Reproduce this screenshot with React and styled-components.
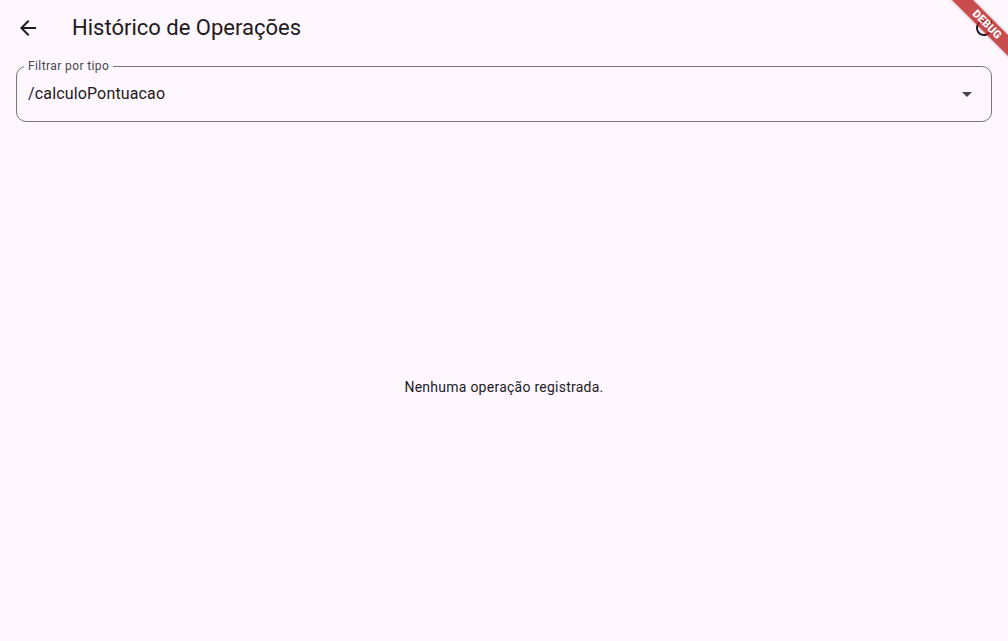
import React from "react"
import styled, { createGlobalStyle } from "styled-components"

const GlobalStyle = createGlobalStyle`
  html, body {
    margin: 0;
    padding: 0;
    background: #fef7ff;
    font-family: Roboto, "Liberation Sans", sans-serif;
    color: #1d1b20;
  }
  * { box-sizing: border-box; }
`

const BackIcon = () => (
  <svg width="24" height="24" viewBox="0 0 24 24" fill="#1d1b20">
    <path d="M20 11H7.83l5.59-5.59L12 4l-8 8 8 8 1.41-1.41L7.83 13H20v-2z" />
  </svg>
)

const RefreshIcon = () => (
  <svg width="24" height="24" viewBox="0 0 24 24" fill="#1d1b20">
    <path d="M17.65 6.35A7.958 7.958 0 0 0 12 4c-4.42 0-7.99 3.58-7.99 8s3.57 8 7.99 8c3.73 0 6.84-2.55 7.73-6h-2.08A5.99 5.99 0 0 1 12 18c-3.31 0-6-2.69-6-6s2.69-6 6-6c1.66 0 3.14.69 4.22 1.78L13 11h7V4l-2.350 2.35z" />
  </svg>
)

const ArrowDropDown = () => (
  <svg width="24" height="24" viewBox="0 0 24 24" fill="#49454f">
    <path d="M7 10l5 5 5-5z" />
  </svg>
)

const App = () => {
  return (
    <>
      <GlobalStyle />
      <Page>
        <AppBar>
          <IconButton aria-label="Voltar">
            <BackIcon />
          </IconButton>
          <Title>Histórico de Operações</Title>
          <IconButton aria-label="Atualizar">
            <RefreshIcon />
          </IconButton>
        </AppBar>
        <FilterArea>
          <Field>
            <FieldLabel>Filtrar por tipo</FieldLabel>
            <FieldValue>/calculoPontuacao</FieldValue>
            <ArrowDropDown />
          </Field>
        </FilterArea>
        <Empty>
          <EmptyText>Nenhuma operação registrada.</EmptyText>
        </Empty>
        <DebugBanner>DEBUG</DebugBanner>
      </Page>
    </>
  )
}

export default App

const Page = styled.div`
  position: relative;
  height: 641px;
  overflow: hidden;
  display: flex;
  flex-direction: column;
  background: #fef7ff;
`

const AppBar = styled.header`
  height: 56px;
  display: flex;
  align-items: center;
  padding: 0 0 0 4px;
  flex-shrink: 0;
`

const IconButton = styled.button`
  width: 48px;
  height: 48px;
  border: none;
  background: transparent;
  padding: 0;
  display: flex;
  align-items: center;
  justify-content: center;
  cursor: pointer;
`

const Title = styled.h1`
  flex: 1;
  margin: 0 0 0 20px;
  font-size: 22px;
  font-weight: 400;
  line-height: 28px;
  color: #1d1b20;
`

const FilterArea = styled.div`
  padding: 10px 16px 11px;
  flex-shrink: 0;
`

const Field = styled.div`
  position: relative;
  height: 56px;
  border: 1px solid #79747e;
  border-radius: 10px;
  display: flex;
  align-items: center;
  padding: 0 12px 0 11px;
`

const FieldLabel = styled.span`
  position: absolute;
  left: 7px;
  top: -8px;
  padding: 0 4px;
  background: #fef7ff;
  font-size: 12px;
  line-height: 14px;
  color: #49454f;
  letter-spacing: 0.4px;
`

const FieldValue = styled.span`
  flex: 1;
  font-size: 16px;
  line-height: 24px;
  color: #1d1b20;
  letter-spacing: 0.15px;
`

const Empty = styled.main`
  flex: 1;
  display: flex;
  align-items: center;
  justify-content: center;
`

const EmptyText = styled.p`
  margin: 0;
  font-size: 14px;
  line-height: 20px;
  letter-spacing: 0.25px;
  color: #1d1b20;
`

const DebugBanner = styled.div`
  position: absolute;
  top: 17px;
  right: -39px;
  width: 120px;
  height: 15px;
  transform: rotate(45deg);
  background: rgba(183, 28, 28, 0.78);
  color: #fff;
  font-family: Roboto, "Liberation Sans", sans-serif;
  font-size: 11px;
  font-weight: 900;
  line-height: 15px;
  text-align: center;
  letter-spacing: 0.2px;
  box-shadow: 0 0 3px rgba(0, 0, 0, 0.35);
`
